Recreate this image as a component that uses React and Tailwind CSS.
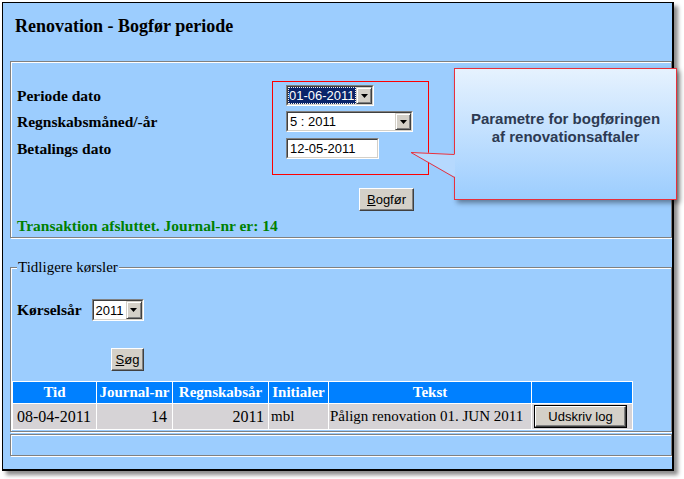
import React from 'react';

const serif = "font-['Liberation_Serif',serif]";
const sans = "font-['Liberation_Sans',Arial,sans-serif]";

function Arrow() {
  return (
    <div className="w-[16px] h-full bg-[#d4d0c8] border border-t-[#d4d0c8] border-l-[#d4d0c8] border-b-[#404040] border-r-[#404040] shadow-[inset_1px_1px_0_#fff,inset_-1px_-1px_0_#808080] flex items-center justify-center">
      <svg width="7" height="4" viewBox="0 0 7 4">
        <polygon points="0,0 7,0 3.5,4" fill="#000" />
      </svg>
    </div>
  );
}

function Sunken({ className, children }) {
  return (
    <div className={`border border-t-[#808080] border-l-[#808080] border-b-white border-r-white ${className}`}>
      <div className="h-full border border-t-[#404040] border-l-[#404040] border-b-[#d4d0c8] border-r-[#d4d0c8] bg-white flex">
        {children}
      </div>
    </div>
  );
}

function Select({ value, width, focused }) {
  return (
    <Sunken className={`${width} h-[21px]`}>
      <div className={`flex-1 flex items-center text-[13px] font-normal leading-none ${sans} ${focused ? 'bg-[#0a246a] text-white outline-1 outline-dotted outline-[#f0f0f0] -outline-offset-1 pl-[1px]' : 'text-black pl-[2px]'}`}>
        {value}
      </div>
      <Arrow />
    </Sunken>
  );
}

function Button({ children, className = '' }) {
  return (
    <div className={`bg-[#d4d0c8] border border-t-white border-l-white border-b-[#404040] border-r-[#404040] shadow-[inset_-1px_-1px_0_#808080] flex items-center justify-center text-[13px] font-normal text-black ${sans} ${className}`}>
      {children}
    </div>
  );
}

function Groove({ className, children }) {
  return (
    <div className={`relative border border-[#808080] shadow-[inset_1px_1px_0_#fff,1px_1px_0_#fff] ${className}`}>
      {children}
    </div>
  );
}

const rows = [
  { tid: '08-04-2011', nr: '14', aar: '2011', ini: 'mbl', tekst: 'Pålign renovation 01. JUN 2011' },
];

export default function App() {
  return (
    <div className="relative w-[684px] h-[479px] bg-white overflow-hidden">
      <div className="ml-[2px] mt-[2px] w-[672px] h-[469px] border-l border-t border-r-2 border-b-2 border-black bg-[#9ccdfe] shadow-[4px_4px_4px_rgba(0,0,0,0.45)] overflow-hidden">
        <h1 className={`mt-[13px] ml-[12px] h-[21px] leading-[21px] text-[18px] font-bold text-black ${serif}`}>
          Renovation - Bogfør periode
        </h1>

        <Groove className="mt-[24px] ml-[7px] h-[177px]">
          <div className={`pl-[6px] pt-[23px] text-[15.5px] font-bold text-black ${serif}`}>
            <div className="flex flex-col gap-[5px]">
              <div className="flex items-center h-[21px]">
                <div className="w-[269px]">Periode dato</div>
                <Select value="01-06-2011" width="w-[88px]" focused />
              </div>
              <div className="flex items-center h-[21px]">
                <div className="w-[269px]">Regnskabsmåned/-år</div>
                <Select value="5 : 2011" width="w-[127px]" />
              </div>
              <div className="flex items-center h-[21px] mt-[1px]">
                <div className="w-[269px]">Betalings dato</div>
                <Sunken className="w-[93px] h-[21px]">
                  <div className={`flex-1 flex items-center pl-[2px] text-[13px] font-normal ${sans}`}>12-05-2011</div>
                </Sunken>
              </div>
            </div>
            <Button className="ml-[342px] mt-[29px] w-[55px] h-[23px]">
              <span><span className="underline">B</span>ogfør</span>
            </Button>
            <div className="mt-[6px] leading-[18px] text-[#008000]">
              Transaktion afsluttet. Journal-nr er: 14
            </div>
          </div>
          <div className="absolute left-[261px] top-[19px] w-[157px] h-[94px] border border-[#ff0000]" />
        </Groove>

        <Groove className="mt-[29px] ml-[7px] h-[165px]">
          <span className={`absolute -top-[9px] left-[6px] px-[1px] bg-[#9ccdfe] text-[15px] leading-[17px] text-black ${serif}`}>
            Tidligere kørsler
          </span>
          <div className="pt-[31px] pl-[6px]">
            <div className="flex items-center h-[22px]">
              <span className={`text-[15.5px] font-bold text-black ${serif}`}>Kørselsår</span>
              <Select value="2011" width="w-[52px] h-[22px] ml-[10px]" />
            </div>
            <Button className="ml-[94px] mt-[27px] w-[33px] h-[23px]">
              <span><span className="underline">S</span>øg</span>
            </Button>
          </div>
          <div className={`ml-[1px] mt-[10px] w-[621px] grid grid-cols-[83px_75px_95px_59px_202px_100px] grid-rows-[21px_25px] gap-px p-px bg-white text-[15px] ${serif}`}>
            {['Tid', 'Journal-nr', 'Regnskabsår', 'Initialer', 'Tekst', ''].map((h, i) => (
              <div key={i} className="bg-[#0080ff] text-white font-bold flex items-center justify-center whitespace-nowrap">
                {h}
              </div>
            ))}
            {rows.map((r) => (
              <React.Fragment key={r.tid}>
                <div className="bg-[#d6d3d6] flex items-center pl-[4px] text-[16px]">{r.tid}</div>
                <div className="bg-[#d6d3d6] flex items-center justify-end pr-[5px] text-[16px]">{r.nr}</div>
                <div className="bg-[#d6d3d6] flex items-center justify-end pr-[4px] text-[16px]">{r.aar}</div>
                <div className="bg-[#d6d3d6] flex items-center pl-[2px]">{r.ini}</div>
                <div className="bg-[#d6d3d6] flex items-center pl-[1px] whitespace-nowrap">{r.tekst}</div>
                <div className="bg-[#d6d3d6] flex items-center pl-[2px]">
                  <div className="border border-black">
                    <Button className="w-[91px] h-[21px]">Udskriv log</Button>
                  </div>
                </div>
              </React.Fragment>
            ))}
          </div>
        </Groove>

        <Groove className="mt-[2px] ml-[7px] h-[22px]" />
      </div>

      {/* annotation callout */}
      <div className="absolute left-[454px] top-[68px] w-[223px] h-[132px] border border-[#e8303c] bg-gradient-to-b from-[#e6f2fe] to-[#9ccdfe] shadow-[3px_3px_5px_rgba(0,0,0,0.4)]">
        <div className={`pt-[41px] text-center text-[15px] leading-[18px] font-bold text-[#2d3a52] ${sans}`}>
          Parametre for bogføringen
          <br />
          af renovationsaftaler
        </div>
      </div>
      <svg className="absolute left-[405px] top-[145px]" width="52" height="40" viewBox="0 0 52 40">
        <polygon points="50,9 6,7 50,32" fill="#b6d9fe" />
        <polyline points="49.5,9.5 6,7.5 49.5,32.5" fill="none" stroke="#e8303c" strokeWidth="1" />
      </svg>
    </div>
  );
}
